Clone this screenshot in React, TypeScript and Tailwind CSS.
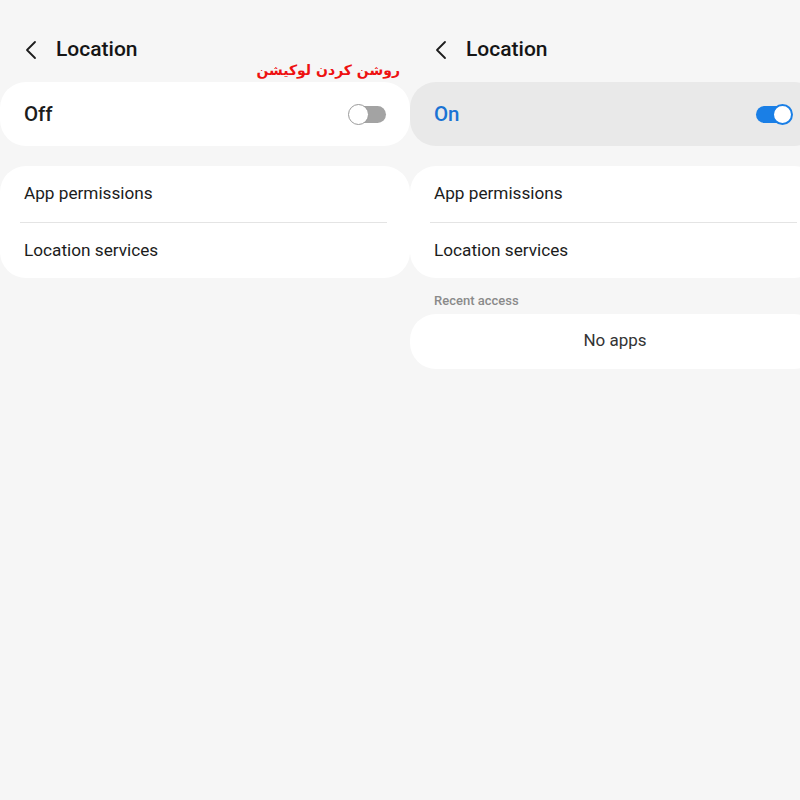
import React from "react";

function Chevron() {
  return (
    <svg width="14" height="20" viewBox="0 0 14 20" fill="none">
      <path d="M11 2 L3 10 L11 18" stroke="#1c1c1c" strokeWidth="1.8" strokeLinecap="round" strokeLinejoin="round" />
    </svg>
  );
}

function Toggle({ on }: { on: boolean }) {
  return on ? (
    <div className="relative w-[37px] h-[21px]">
      <div className="absolute left-0 top-[2px] w-[35px] h-[17px] rounded-full bg-[#1a7fe6]" />
      <div className="absolute right-0 top-0 w-[21px] h-[21px] rounded-full bg-white border-2 border-[#1a7fe6]" />
    </div>
  ) : (
    <div className="relative w-[38px] h-[21px]">
      <div className="absolute right-0 top-[2px] w-[36px] h-[17px] rounded-full bg-[#a3a3a3]" />
      <div className="absolute left-0 top-0 w-[21px] h-[21px] rounded-full bg-white border-[1.5px] border-[#9a9a9a]" />
    </div>
  );
}

function Panel({ on }: { on: boolean }) {
  return (
    <div className="w-[410px] shrink-0 flex flex-col">
      {/* Header */}
      <div className="h-[82px] pt-[18px] pl-[24px] flex items-center gap-[18px]">
        <Chevron />
        <span className="text-[21px] font-medium text-[#151515]">Location</span>
      </div>

      {/* Master switch */}
      <div
        className={`h-[64px] rounded-[26px] flex items-center justify-between pl-[24px] ${
          on ? "bg-[#e9e9e9] pr-[27px]" : "bg-white pr-[24px]"
        }`}
      >
        <span className={`text-[20.5px] font-medium ${on ? "text-[#1a73d4]" : "text-[#1c1c1c]"}`}>
          {on ? "On" : "Off"}
        </span>
        <Toggle on={on} />
      </div>

      {/* Menu */}
      <div className="mt-[20px] rounded-[26px] bg-white px-[24px] flex flex-col">
        <div className="h-[56px] flex items-center text-[17.2px] text-[#1c1c1c]">App permissions</div>
        <div className="h-px bg-[#e4e4e4] -ml-[4px] -mr-[1px]" />
        <div className="h-[55px] flex items-center text-[17.2px] text-[#1c1c1c]">Location services</div>
      </div>

      {on && (
        <>
          <div className="pl-[24px] pt-[13px] pb-[3px] text-[13px] font-medium text-[#8a8a8a]">Recent access</div>
          <div className="h-[55px] rounded-[26px] bg-white flex items-center justify-center text-[17px] text-[#333]">
            No apps
          </div>
        </>
      )}
    </div>
  );
}

export default function App() {
  return (
    <div
      className="w-[800px] h-[800px] bg-[#f6f6f6] overflow-hidden relative"
      style={{ fontFamily: "Roboto, 'Noto Sans', sans-serif" }}
    >
      <div className="flex">
        <Panel on={false} />
        <Panel on={true} />
      </div>
      <div
        dir="rtl"
        className="absolute right-[400px] top-[60px] text-[14px] font-bold text-[#ee1111]"
        style={{ fontFamily: "'DejaVu Sans', sans-serif" }}
      >
        روشن کردن لوکیشن
      </div>
    </div>
  );
}
